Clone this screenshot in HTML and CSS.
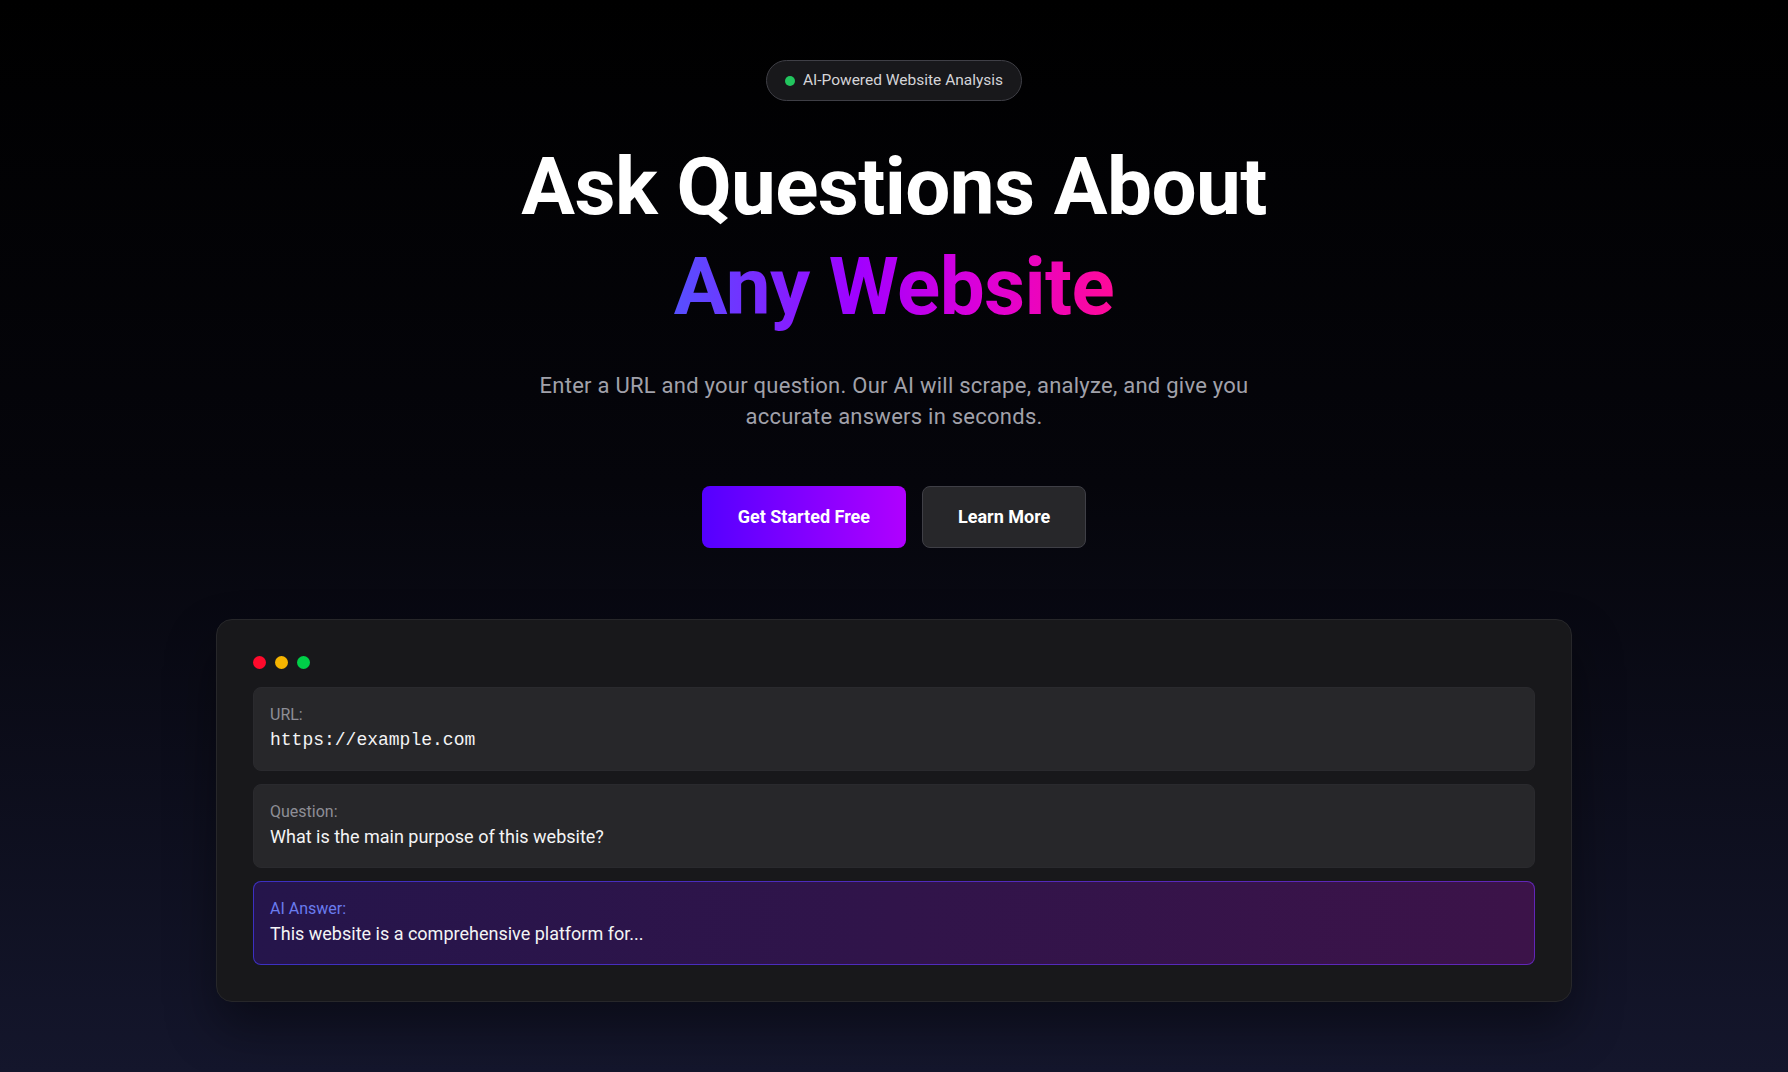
FILE: index.html
```html
<!DOCTYPE html>
<html lang="en">
<head>
  <meta charset="UTF-8" />
  <meta name="viewport" content="width=device-width, initial-scale=1.0"/>
  <title>Ask Questions About Any Website</title>
  <link rel="stylesheet" href="styles.css">
</head>
<body>
  <main class="hero">
    <div class="badge">
      <span class="badge-dot"></span>
      AI-Powered Website Analysis
    </div>

    <h1 class="title">
      Ask Questions About<br>
      <span class="title-accent">Any Website</span>
    </h1>

    <p class="lead">
      Enter a URL and your question. Our AI will scrape, analyze, and give you<br>
      accurate answers in seconds.
    </p>

    <div class="actions">
      <a href="#" class="btn btn-primary">Get Started Free</a>
      <a href="#" class="btn btn-secondary">Learn More</a>
    </div>

    <div class="preview">
      <div class="window-dots">
        <span class="dot dot-red"></span>
        <span class="dot dot-yellow"></span>
        <span class="dot dot-green"></span>
      </div>

      <div class="field">
        <div class="field-label">URL:</div>
        <div class="field-value mono">https://example.com</div>
      </div>

      <div class="field">
        <div class="field-label">Question:</div>
        <div class="field-value">What is the main purpose of this website?</div>
      </div>

      <div class="field field-answer">
        <div class="field-label">AI Answer:</div>
        <div class="field-value">This website is a comprehensive platform for...</div>
      </div>
    </div>
  </main>
</body>
</html>
```

FILE: styles.css
```css
* {
  box-sizing: border-box;
}

body {
  margin: 0;
  min-height: 100vh;
  font-family: Roboto, "Noto Sans", sans-serif;
  color: #fafafa;
  background: linear-gradient(180deg, #000000 0%, #05050b 45%, #14162c 100%);
}

.hero {
  display: flex;
  flex-direction: column;
  align-items: center;
  padding: 60px 20px 40px;
  text-align: center;
}

.badge {
  display: flex;
  align-items: center;
  gap: 8px;
  padding: 9px 18px;
  font-size: 15.5px;
  line-height: 21px;
  color: #d4d4d8;
  background: #18181b;
  border: 1px solid #3f3f46;
  border-radius: 999px;
}

.badge-dot {
  width: 10px;
  height: 10px;
  border-radius: 50%;
  background: #22c55e;
}

.title {
  margin: 36px 0 0;
  font-size: 80px;
  line-height: 100px;
  font-weight: 700;
  letter-spacing: -0.6px;
  color: #ffffff;
}

.title-accent {
  background: linear-gradient(90deg, #5650ff 0%, #a100ff 42%, #dd00d8 70%, #ff0a98 100%);
  -webkit-background-clip: text;
  background-clip: text;
  color: transparent;
}

.lead {
  margin: 33px 0 0;
  font-size: 22px;
  line-height: 31px;
  letter-spacing: 0.25px;
  color: #a1a1aa;
}

.actions {
  display: flex;
  gap: 16px;
  margin-top: 54px;
}

.btn {
  display: inline-block;
  padding: 18px 35px;
  font-size: 18px;
  line-height: 24px;
  font-weight: 700;
  color: #ffffff;
  text-decoration: none;
  border-radius: 8px;
  border: 1px solid transparent;
}

.btn-primary {
  background: linear-gradient(90deg, #5400ff, #b000ff) border-box;
}

.btn-secondary {
  background: #27272a;
  border-color: #3f3f46;
}

.preview {
  width: 1356px;
  margin-top: 71px;
  padding: 36px;
  text-align: left;
  background: #18181b;
  border: 1px solid #27272a;
  border-radius: 16px;
  box-shadow: 0 25px 50px rgba(0, 0, 0, 0.4);
  display: flex;
  flex-direction: column;
  gap: 13px;
}

.window-dots {
  display: flex;
  gap: 9px;
  margin-bottom: 5px;
}

.dot {
  width: 13px;
  height: 13px;
  border-radius: 50%;
}

.dot-red { background: #ff0a2c; }
.dot-yellow { background: #f5b400; }
.dot-green { background: #00d048; }

.field {
  padding: 16px;
  background: #27272a;
  border: 1px solid #2a2a2e;
  border-radius: 8px;
}

.field-label {
  font-size: 16px;
  line-height: 22px;
  color: #8e8e96;
}

.field-value {
  font-size: 18px;
  line-height: 28px;
  color: #f4f4f5;
}

.mono {
  font-family: "Liberation Mono", monospace;
}

.field-answer {
  border: 1px solid transparent;
  background:
    linear-gradient(90deg, #25154b, #3c1349) padding-box,
    linear-gradient(90deg, #3c30c2, #6226b8) border-box;
}

.field-answer .field-label {
  color: #6a7cef;
}
```
